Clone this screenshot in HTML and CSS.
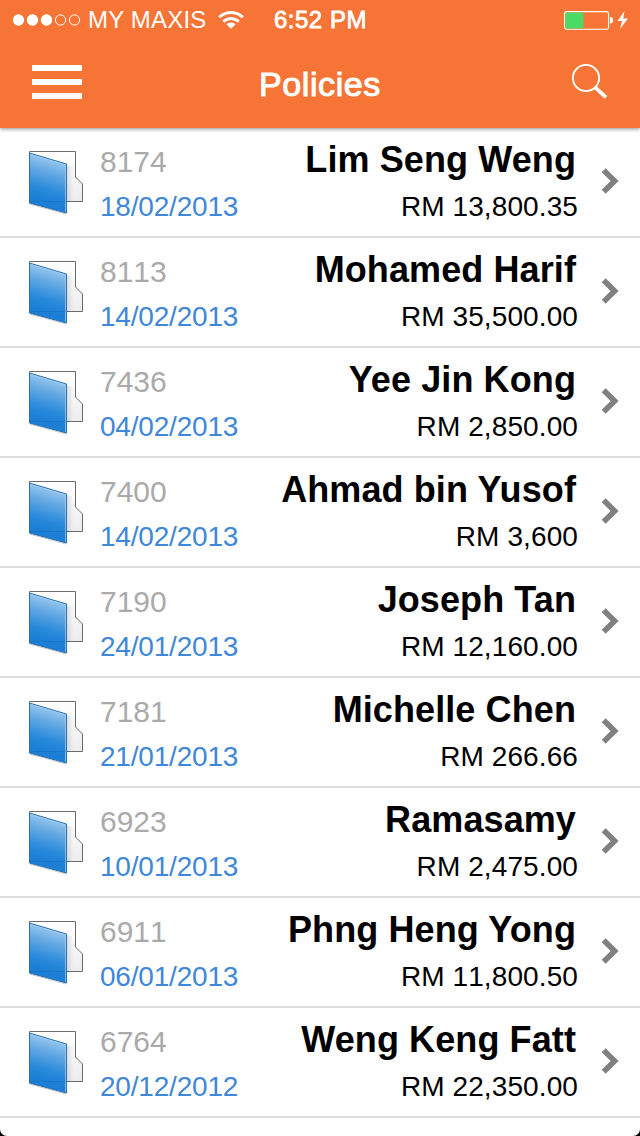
FILE: index.html
```
<!DOCTYPE html>
<html lang="en">
<head>
  <meta charset="UTF-8" />
  <meta name="viewport" content="width=device-width,initial-scale=1.0" />
  <title>Policies</title>
  <link rel="stylesheet" href="styles.css">
</head>
<body>
  <svg class="defs" width="0" height="0">
    <defs>
      <linearGradient id="paper" x1="0" y1="0" x2="0" y2="1">
        <stop offset="0" stop-color="#ffffff" />
        <stop offset="1" stop-color="#ececee" />
      </linearGradient>
      <linearGradient id="shade" x1="0" y1="0" x2="1" y2="0">
        <stop offset="0" stop-color="#000" stop-opacity=".1" />
        <stop offset="1" stop-color="#000" stop-opacity="0" />
      </linearGradient>
      <linearGradient id="cover" gradientUnits="userSpaceOnUse" x1="27" y1="6" x2="14" y2="50">
        <stop offset="0" stop-color="#a6cff1" />
        <stop offset=".35" stop-color="#68abe4" />
        <stop offset=".75" stop-color="#2a8adb" />
        <stop offset="1" stop-color="#1a7fd5" />
      </linearGradient>
      <symbol id="folder" viewBox="0 0 56 66">
        <path d="M1.5 1.5H47.5V27L54.5 34V51.5H1.5Z" fill="url(#paper)" stroke="#6a6a6a" />
        <path d="M39 16H45V51H39Z" fill="url(#shade)" />
        <path d="M1.5 54L38 64" stroke="#ccc" />
        <path d="M1.5 3L38.5 14V63L1.5 53Z" fill="url(#cover)" stroke="#2a6fae" />
        <path d="M2.5 4.5L37.5 15V62" fill="none" stroke="#a5d0f2" stroke-opacity=".7" />
        <path d="M2 51.5H38" stroke="#0f5ea6" stroke-opacity=".3" />
      </symbol>
      <symbol id="chevron" viewBox="0 0 18 26">
        <path d="M2.7 2.3L13.6 13L2.7 23.7" fill="none" stroke="#808080" stroke-width="5.6" />
      </symbol>
    </defs>
  </svg>

  <div class="screen">
    <header>
      <div class="status">
        <svg class="signal" width="68" height="14" viewBox="0 0 68 14" fill="#fff">
          <circle cx="5.5" cy="7" r="5.7" />
          <circle cx="19.5" cy="7" r="5.7" />
          <circle cx="33.5" cy="7" r="5.7" />
          <circle cx="47.5" cy="7" r="5.1" fill="none" stroke="#fff" />
          <circle cx="61.5" cy="7" r="5.1" fill="none" stroke="#fff" />
        </svg>
        <span class="carrier">MY MAXIS</span>
        <svg class="wifi" width="26" height="18" viewBox="0 0 26 18" fill="none" stroke="#fff" stroke-width="2.9">
          <path d="M1.2 6.2A17 17 0 0 1 24.8 6.2" />
          <path d="M5.3 10.6A11 11 0 0 1 20.7 10.6" />
          <path d="M8.4 13.3A6.5 6.5 0 0 1 17.6 13.3L13 17.7Z" fill="#fff" stroke="none" />
        </svg>
        <span class="time">6:52 PM</span>
        <svg class="battery" width="65" height="20" viewBox="0 0 65 20">
          <rect x=".6" y="1.6" width="44" height="17.6" rx="2.5" fill="none" stroke="#fff" stroke-width="1.1" />
          <rect x="1.5" y="2.5" width="18" height="16" rx="1" fill="#4cd964" />
          <path d="M46 7Q49 7 49 10.3Q49 13.6 46 13.6Z" fill="#fff" />
          <path d="M60.5 1L53.5 11H58L56 19L64 8.5H59.3Z" fill="#fff" />
        </svg>
      </div>
      <div class="navbar">
        <div class="menu"><i></i><i></i><i></i></div>
        <h1>Policies</h1>
        <svg class="search" width="36" height="36" viewBox="0 0 36 36" fill="none" stroke="#fff">
          <circle cx="14" cy="14" r="13.1" stroke-width="1.9" />
          <path d="M22.8 23.2L34 33.4" stroke-width="3.8" />
        </svg>
      </div>
    </header>

    <ul class="policies">
      <li>
        <svg class="folder"><use href="#folder" /></svg>
        <div class="info">
          <span class="number">8174</span><span class="name">Lim Seng Weng</span>
          <span class="date">18/02/2013</span><span class="amount">RM 13,800.35</span>
        </div>
        <svg class="chevron"><use href="#chevron" /></svg>
      </li>
      <li>
        <svg class="folder"><use href="#folder" /></svg>
        <div class="info">
          <span class="number">8113</span><span class="name">Mohamed Harif</span>
          <span class="date">14/02/2013</span><span class="amount">RM 35,500.00</span>
        </div>
        <svg class="chevron"><use href="#chevron" /></svg>
      </li>
      <li>
        <svg class="folder"><use href="#folder" /></svg>
        <div class="info">
          <span class="number">7436</span><span class="name">Yee Jin Kong</span>
          <span class="date">04/02/2013</span><span class="amount">RM 2,850.00</span>
        </div>
        <svg class="chevron"><use href="#chevron" /></svg>
      </li>
      <li>
        <svg class="folder"><use href="#folder" /></svg>
        <div class="info">
          <span class="number">7400</span><span class="name">Ahmad bin Yusof</span>
          <span class="date">14/02/2013</span><span class="amount">RM 3,600</span>
        </div>
        <svg class="chevron"><use href="#chevron" /></svg>
      </li>
      <li>
        <svg class="folder"><use href="#folder" /></svg>
        <div class="info">
          <span class="number">7190</span><span class="name">Joseph Tan</span>
          <span class="date">24/01/2013</span><span class="amount">RM 12,160.00</span>
        </div>
        <svg class="chevron"><use href="#chevron" /></svg>
      </li>
      <li>
        <svg class="folder"><use href="#folder" /></svg>
        <div class="info">
          <span class="number">7181</span><span class="name">Michelle Chen</span>
          <span class="date">21/01/2013</span><span class="amount">RM 266.66</span>
        </div>
        <svg class="chevron"><use href="#chevron" /></svg>
      </li>
      <li>
        <svg class="folder"><use href="#folder" /></svg>
        <div class="info">
          <span class="number">6923</span><span class="name">Ramasamy</span>
          <span class="date">10/01/2013</span><span class="amount">RM 2,475.00</span>
        </div>
        <svg class="chevron"><use href="#chevron" /></svg>
      </li>
      <li>
        <svg class="folder"><use href="#folder" /></svg>
        <div class="info">
          <span class="number">6911</span><span class="name">Phng Heng Yong</span>
          <span class="date">06/01/2013</span><span class="amount">RM 11,800.50</span>
        </div>
        <svg class="chevron"><use href="#chevron" /></svg>
      </li>
      <li>
        <svg class="folder"><use href="#folder" /></svg>
        <div class="info">
          <span class="number">6764</span><span class="name">Weng Keng Fatt</span>
          <span class="date">20/12/2012</span><span class="amount">RM 22,350.00</span>
        </div>
        <svg class="chevron"><use href="#chevron" /></svg>
      </li>
    </ul>
  </div>
</body>
</html>
```
FILE: styles.css
```
* { box-sizing: border-box; margin: 0; padding: 0; }
html, body {
  height: 100%;
  background: #000;
  overflow: hidden;
}
body { font-family: "Liberation Sans", Arial, sans-serif; }
svg { display: block; flex: none; }
.defs { position: absolute; }
.screen {
  width: 640px;
  height: 1136px;
  background: #fff;
  border-radius: 0 0 7px 7px;
  overflow: hidden;
}

header {
  position: relative;
  height: 128px;
  background: #f67435;
  color: #fff;
  box-shadow: 0 1px 4px rgba(0, 0, 0, 0.45);
}
.status {
  display: flex;
  align-items: center;
  height: 40px;
  padding: 0 11px 0 13px;
  font-size: 24px;
  line-height: 42px;
}
.carrier {
  width: 118px;
  margin-left: 7px;
  letter-spacing: 0.2px;
  white-space: nowrap;
}
.wifi { margin-left: 12px; }
.time {
  margin-left: 30px;
  letter-spacing: 0.5px;
  -webkit-text-stroke: 0.8px #fff;
}
.battery { margin-left: auto; }

.navbar {
  display: grid;
  grid-template-columns: 50px 1fr 36px;
  align-items: center;
  height: 84px;
  padding: 0 32px;
}
.menu { display: flex; flex-direction: column; gap: 8px; }
.menu i { height: 6px; background: #fff; }
h1 {
  padding: 5px 14px 0 0;
  font-size: 34px;
  font-weight: normal;
  letter-spacing: 0.6px;
  text-align: center;
  -webkit-text-stroke: 1px #fff;
}

.policies { list-style: none; }
.policies li {
  display: flex;
  height: 110px;
  padding: 10px 21px 0 28px;
  border-bottom: 2px solid #dcdcdc;
}
.folder { width: 56px; height: 66px; margin-top: 12px; }
.info {
  flex: 1;
  display: grid;
  grid-template-columns: auto 1fr;
  grid-template-rows: 44px 50px;
  align-items: baseline;
  margin-left: 16px;
  white-space: nowrap;
  font-kerning: none;
}
.number { font-size: 30px; color: #aaa; }
.name {
  font-size: 36px;
  font-weight: bold;
  line-height: 44px;
  letter-spacing: 0.1px;
  text-align: right;
  padding-right: 2px;
  font-kerning: normal;
}
.date, .amount { font-size: 28px; line-height: 50px; }
.date { color: #3f87d8; letter-spacing: -0.2px; }
.amount { text-align: right; letter-spacing: 0.1px; }
.chevron { width: 18px; height: 26px; margin: 30px 0 0 23px; }
```
